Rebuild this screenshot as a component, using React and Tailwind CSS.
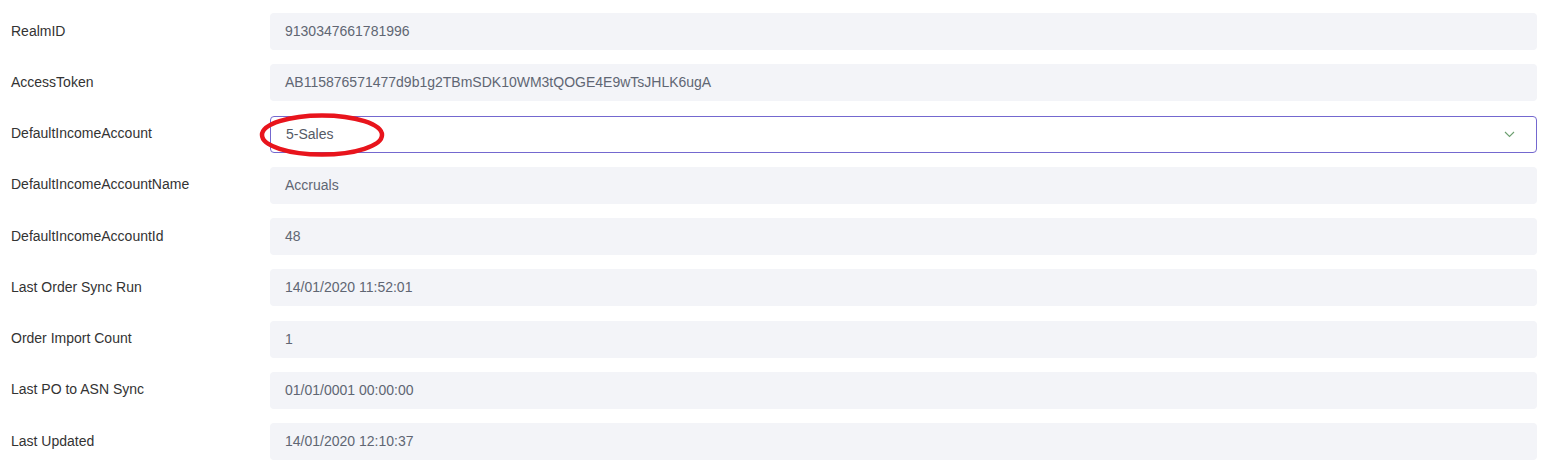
const rows = [
  { label: 'RealmID', value: '9130347661781996' },
  { label: 'AccessToken', value: 'AB115876571477d9b1g2TBmSDK10WM3tQOGE4E9wTsJHLK6ugA' },
  { label: 'DefaultIncomeAccount', value: '5-Sales', select: true },
  { label: 'DefaultIncomeAccountName', value: 'Accruals' },
  { label: 'DefaultIncomeAccountId', value: '48' },
  { label: 'Last Order Sync Run', value: '14/01/2020 11:52:01' },
  { label: 'Order Import Count', value: '1' },
  { label: 'Last PO to ASN Sync', value: '01/01/0001 00:00:00' },
  { label: 'Last Updated', value: '14/01/2020 12:10:37' },
];

const Field = ({ row }) => {
  if (row.select) {
    return (
      <div className="relative flex h-[37px] flex-1 items-center rounded-[4px] border border-[#7468cf] bg-white pl-[15px] pr-[20px] text-[#555a66]">
        <span className="flex-1">{row.value}</span>
        <svg width="11" height="7" viewBox="0 0 11 7" className="mr-[1px]">
          <path d="M1 1l4.5 4.5L10 1" fill="none" stroke="#6c9f70" strokeWidth="1.1" />
        </svg>
        {/* red annotation circle */}
        <svg className="pointer-events-none absolute left-[-13px] top-[-4px]" width="132" height="48" viewBox="0 0 132 48">
          <ellipse cx="64" cy="22" rx="60" ry="19.5" fill="none" stroke="#e8141c" strokeWidth="4.5" />
        </svg>
      </div>
    );
  }
  return (
    <div className="flex h-[37px] flex-1 items-center rounded-[4px] bg-[#f3f4f8] pl-[15px] text-[#606673]">
      {row.value}
    </div>
  );
};

export default function App() {
  return (
    <div className="flex flex-col gap-[14.25px] bg-white pt-[13px] pr-[11px] font-['Liberation_Sans',Arial,sans-serif] text-[14px]">
      {rows.map((row) => (
        <div key={row.label} className="flex items-center">
          <div className="w-[270px] pb-[1px] pl-[11px] text-[#333333]">{row.label}</div>
          <Field row={row} />
        </div>
      ))}
    </div>
  );
}
